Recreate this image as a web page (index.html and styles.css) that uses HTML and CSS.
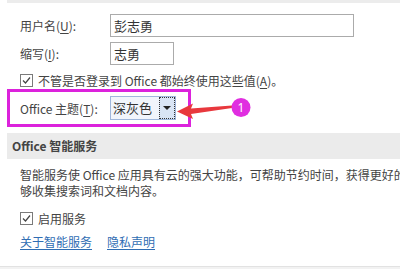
FILE: index.html
```html
<!DOCTYPE html>
<html lang="zh-CN">
<head>
<meta charset="utf-8">
<link rel="stylesheet" href="styles.css">
</head>
<body>
<div class="page">
  <div class="topbar"></div>
  <div class="form">
    <div class="row">
      <span class="label">用户名(<u>U</u>):</span>
      <div class="input input-wide">彭志勇</div>
    </div>
    <div class="row row-gap">
      <span class="label">缩写(<u>I</u>):</span>
      <div class="input input-short">志勇</div>
    </div>
    <div class="check-row first-check">
      <span class="checkbox"><svg viewBox="0 0 13 13" width="13" height="13"><path d="M3 6.5 L5.5 9 L10 3.5" fill="none" stroke="#444" stroke-width="1.2"/></svg></span>
      <span>不管是否登录到 Office 都始终使用这些值(<u>A</u>)。</span>
    </div>
    <div class="theme-frame">
      <span class="label">Office 主题(<u>T</u>):</span>
      <div class="select">
        <span class="select-text">深灰色</span>
        <span class="select-btn"><span class="tri"></span></span>
      </div>
    </div>
  </div>
  <div class="section-head">Office 智能服务</div>
  <div class="section-body">
    <p class="para">智能服务使 Office 应用具有云的强大功能，可帮助节约时间，获得更好的体验。若要提供这些服务，Microsoft 需要能<br>够收集搜索词和文档内容。</p>
    <div class="check-row second-check">
      <span class="checkbox"><svg viewBox="0 0 13 13" width="13" height="13"><path d="M3 6.5 L5.5 9 L10 3.5" fill="none" stroke="#444" stroke-width="1.2"/></svg></span>
      <span>启用服务</span>
    </div>
    <div class="links">
      <a class="link">关于智能服务</a>
      <a class="link">隐私声明</a>
    </div>
  </div>
  <div class="footer"></div>
  <svg class="annot" viewBox="0 0 400 269" width="400" height="269">
    <polygon points="177,111.5 193,103.5 191,108.5 232,105.5 232,108 191,114 193,119" fill="#e8383d"/>
    <circle cx="241" cy="107.5" r="9.5" fill="#e02ee0"/>
    <text x="241" y="112" text-anchor="middle" class="annot-num">1</text>
  </svg>
</div>
</body>
</html>
```
FILE: styles.css
```css
html, body {
  margin: 0;
  padding: 0;
}
body {
  width: 400px;
  height: 269px;
  overflow: hidden;
  background: #ffffff;
  font-family: "Noto Sans CJK SC", "Noto Sans", sans-serif;
  font-size: 12px;
  color: #444444;
}
.page {
  position: relative;
  width: 400px;
  height: 269px;
  display: flex;
  flex-direction: column;
  overflow: hidden;
}
u {
  text-decoration: underline;
  text-underline-offset: 2px;
}
.topbar {
  height: 3px;
  margin-left: 7px;
  background: #ececec;
  flex: none;
}
.form {
  padding-left: 20px;
  padding-top: 11px;
}
.row {
  display: flex;
  align-items: center;
  height: 23px;
}
.row-gap {
  margin-top: 5px;
}
.label {
  width: 90px;
  flex: none;
  white-space: nowrap;
}
.input {
  height: 23px;
  box-sizing: border-box;
  border: 1px solid #ababab;
  padding-left: 3px;
  line-height: 21px;
  font-size: 13px;
  color: #333333;
  background: #ffffff;
}
.input-wide {
  width: 244px;
}
.input-short {
  width: 64px;
}
.check-row {
  display: flex;
  align-items: center;
  gap: 5px;
  height: 13px;
  white-space: nowrap;
}
.first-check {
  margin-top: 9px;
}
.checkbox {
  width: 13px;
  height: 13px;
  box-sizing: border-box;
  border: 1px solid #7a7a7a;
  background: #ffffff;
  display: flex;
  align-items: center;
  justify-content: center;
  flex: none;
  overflow: hidden;
}
.checkbox svg {
  display: block;
  flex: none;
}
.theme-frame {
  margin-top: 2px;
  margin-left: -13px;
  width: 184px;
  height: 38px;
  box-sizing: border-box;
  border: 3px solid #dc22dc;
  padding-left: 10px;
  display: flex;
  align-items: center;
}
.select {
  width: 66px;
  height: 24px;
  box-sizing: border-box;
  border: 1px solid #9fb7dc;
  background: #f1f5fb;
  display: flex;
  align-items: stretch;
}
.select-text {
  flex: 1;
  padding-left: 2px;
  line-height: 22px;
  font-size: 13px;
  color: #333333;
}
.select-btn {
  width: 16px;
  box-sizing: border-box;
  border: 1px dotted #333333;
  background: #d9e5f5;
  display: flex;
  align-items: center;
  justify-content: center;
}
.tri {
  width: 0;
  height: 0;
  border-left: 4px solid transparent;
  border-right: 4px solid transparent;
  border-top: 4px solid #222222;
}
.section-head {
  margin-top: 6px;
  margin-left: 7px;
  height: 26px;
  line-height: 26px;
  padding-left: 5px;
  background: #ebebeb;
  font-weight: bold;
  font-size: 12px;
  color: #444444;
  flex: none;
}
.section-body {
  padding-left: 20px;
}
.para {
  margin: 8px 0 0 0;
  line-height: 16px;
  white-space: nowrap;
}
.second-check {
  margin-top: 13px;
}
.links {
  margin-top: 9px;
  display: flex;
  gap: 15px;
  line-height: 16px;
}
.link {
  color: #2f6db3;
  text-decoration: underline;
  text-underline-offset: 2px;
}
.footer {
  margin-top: auto;
  height: 2px;
  border-top: 1px solid #e2e2e2;
  background: #f2f2f2;
  flex: none;
}
.annot {
  position: absolute;
  left: 0;
  top: 0;
  pointer-events: none;
}
.annot-num {
  fill: #ffffff;
  font-family: "Noto Sans", sans-serif;
  font-size: 12px;
}
```
